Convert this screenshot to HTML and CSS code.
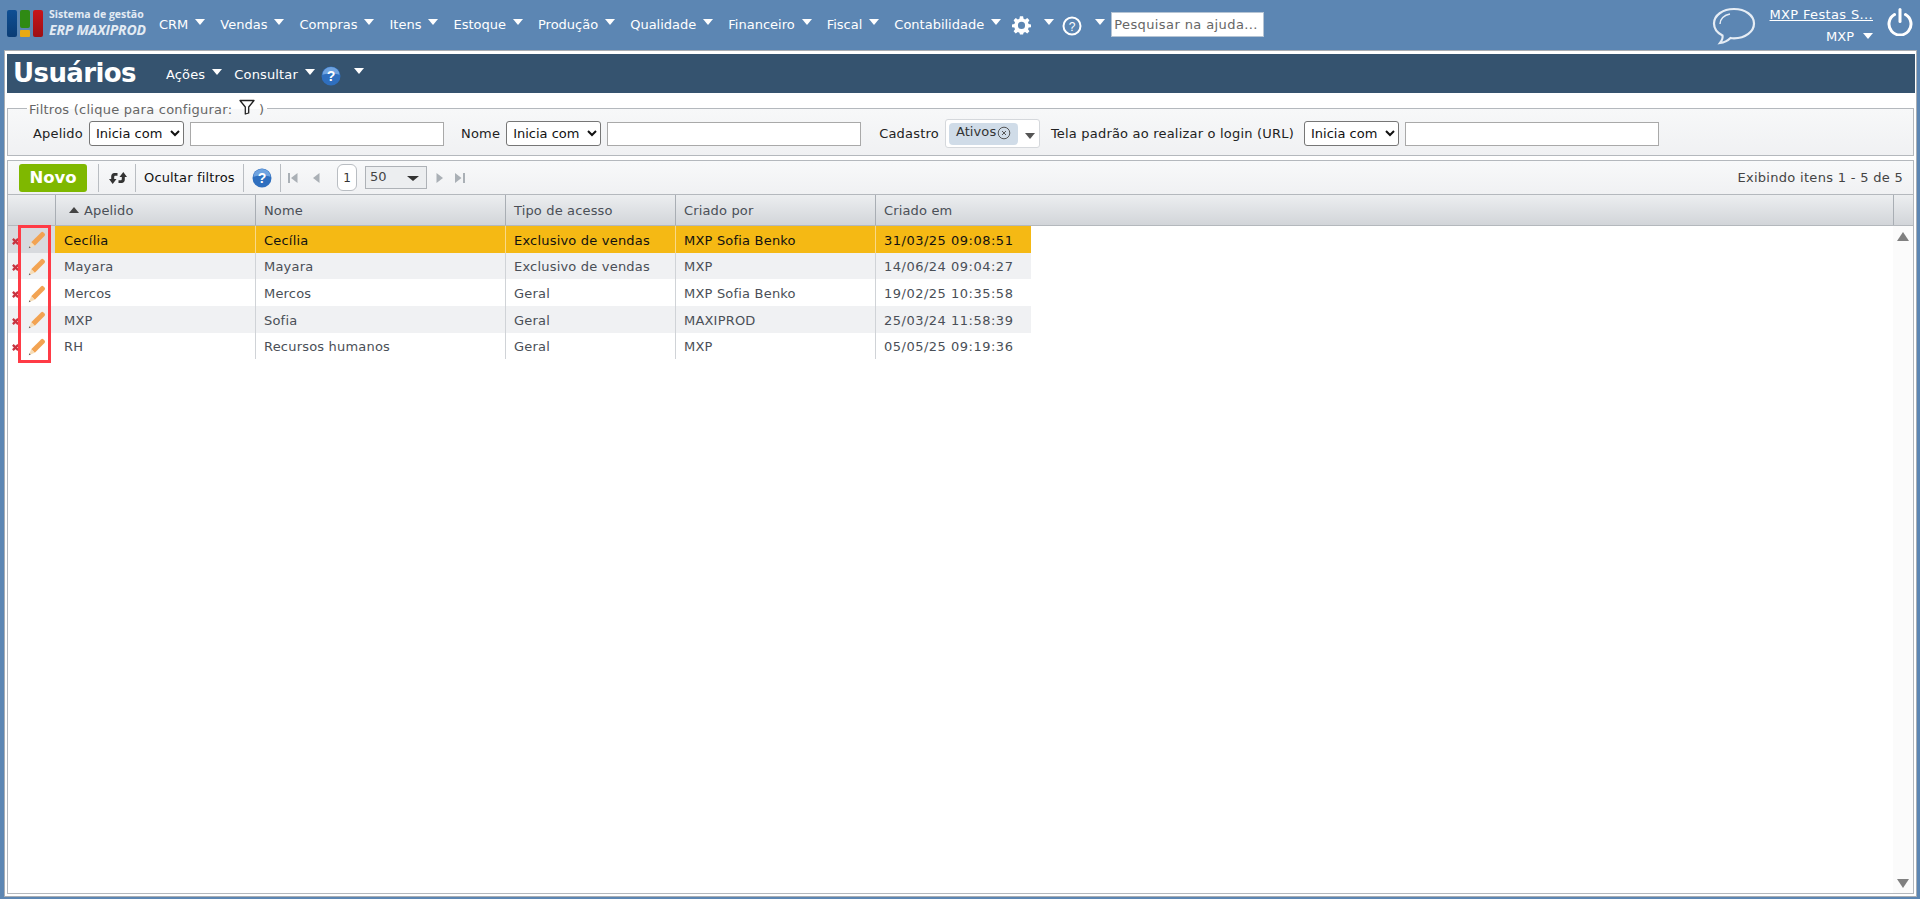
FILE: index.html
```html
<!DOCTYPE html>
<html lang="pt-BR">
<head>
<meta charset="utf-8">
<title>Usuários</title>
<link rel="stylesheet" href="styles.css">
</head>
<body>
<svg class="defs" width="0" height="0">
  <defs>
    <symbol id="pencil" viewBox="0 0 18 18">
      <path d="M3.200 11.200 13 1.400a1.800 1.800 0 0 1 2.500 0l1 1a1.800 1.800 0 0 1 0 2.500L6.800 14.800Z" fill="#f2a352"/>
      <path d="M3.200 11.200 6.800 14.800 .8 17.200Z" fill="#f6dcb6"/>
      <path d="M1.500 15.300 2.700 16.500.8 17.200Z" fill="#555"/>
    </symbol>
    <symbol id="cross" viewBox="0 0 8 8">
      <path d="M1 1 7 7M7 1 1 7" stroke="#c8333f" stroke-width="2.6"/>
    </symbol>
    <symbol id="help" viewBox="0 0 20 20">
      <circle cx="10" cy="10" r="9.5" fill="#2f6fbf"/>
      <path d="M1.5 9a8.5 8 0 0 1 17 0c-3 -2-14 -2-17 0Z" fill="#6fa3e0"/>
      <text x="10" y="15" text-anchor="middle" class="help-mark">?</text>
    </symbol>
  </defs>
</svg>
<header class="topbar">
  <div class="logo">
    <div class="logo-mark">
      <span class="logo-bar logo-blue"></span>
      <span class="logo-col"><span class="logo-green"></span><span class="logo-yellow"></span></span>
      <span class="logo-bar logo-red"></span>
    </div>
    <div class="logo-text"><span class="logo-top">Sistema de gestão</span><span class="logo-bottom">ERP MAXIPROD</span></div>
  </div>
  <nav class="menu">
    <span class="menu-item">CRM<i class="caret"></i></span>
    <span class="menu-item">Vendas<i class="caret"></i></span>
    <span class="menu-item">Compras<i class="caret"></i></span>
    <span class="menu-item">Itens<i class="caret"></i></span>
    <span class="menu-item">Estoque<i class="caret"></i></span>
    <span class="menu-item">Produção<i class="caret"></i></span>
    <span class="menu-item">Qualidade<i class="caret"></i></span>
    <span class="menu-item">Financeiro<i class="caret"></i></span>
    <span class="menu-item">Fiscal<i class="caret"></i></span>
    <span class="menu-item menu-last">Contabilidade<i class="caret"></i></span>
    <svg class="gear" viewBox="0 0 24 24"><path fill="#fff" fill-rule="evenodd" d="M10 1h4l.6 3.2 2 .8L19.300 3.200 22 6l-1.800 2.700.8 2L24 11.300v3.400l-3 .6-.8 2L22 20l-2.700 2.700-2.700-1.800-2 .8L14 24h-4l-.6-2.300-2-.8L4.700 22.700 2 20l1.800-2.700-.8-2L0 14.700v-3.400l3-.6.8-2L2 6l2.700-2.800L7.400 5l2-.8ZM12 8a4.500 4.500 0 1 0 0 9 4.500 4.500 0 0 0 0-9Z"/></svg>
    <i class="caret caret-gear"></i>
    <svg class="qmark" viewBox="0 0 20 20"><circle cx="10" cy="10" r="8.500" fill="none" stroke="#fff" stroke-width="2"/><text x="10" y="14.500" text-anchor="middle" class="qmark-text">?</text></svg>
    <i class="caret caret-q"></i>
    <input class="search" type="text" placeholder="Pesquisar na ajuda...">
  </nav>
  <div class="user-area">
    <svg class="bubble" viewBox="0 0 44 38"><path d="M22 2C10.500 2 2 8.500 2 16.500c0 5 3.500 9.500 8.500 12 .5 2.500-.5 5-2.500 7.500 4.500-.5 8-2.500 10.500-5 1 .2 2.300.3 3.500.3 11.500 0 20-6.800 20-14.800S33.500 2 22 2Z" fill="none" stroke="#e6edf5" stroke-width="2.200"/><path d="M8 17c0-5 4-9 10-10" fill="none" stroke="#e6edf5" stroke-width="1.500"/></svg>
    <div class="user-info">
      <a class="user-name" href="#">MXP Festas S...</a>
      <span class="user-role">MXP<i class="caret caret-role"></i></span>
    </div>
    <svg class="power" viewBox="0 0 26 28"><path d="M7.500 6.500a11 11 0 1 0 11 0" fill="none" stroke="#fff" stroke-width="3" stroke-linecap="round"/><path d="M13 1.500v12" stroke="#fff" stroke-width="3" stroke-linecap="round"/></svg>
  </div>
</header>

<main class="panel">
  <div class="title-bar">
    <h1 class="title">Usuários</h1>
    <span class="title-menu">Ações<i class="caret caret-title"></i></span>
    <span class="title-menu title-menu-2">Consultar<i class="caret caret-title"></i></span>
    <svg class="help-icon help-title"><use href="#help"/></svg>
    <i class="caret caret-title caret-help"></i>
  </div>

  <fieldset class="filters">
    <legend class="legend">Filtros (clique para configurar: <svg class="funnel" viewBox="0 0 16 16"><path d="M1 1.500h14L9.700 8v6L6.300 15V8Z" fill="none" stroke="#222" stroke-width="1.300" stroke-linejoin="round"/></svg> )</legend>
    <label class="flabel flabel-apelido">Apelido</label>
    <select class="fselect"><option>Inicia com</option></select>
    <input class="finput" type="text">
    <label class="flabel flabel-nome">Nome</label>
    <select class="fselect"><option>Inicia com</option></select>
    <input class="finput finput-nome" type="text">
    <label class="flabel flabel-cadastro">Cadastro</label>
    <div class="multi">
      <span class="tag">Ativos<svg class="tag-x" viewBox="0 0 14 14"><circle cx="7" cy="7" r="5.800" fill="none" stroke="#555" stroke-width="1"/><path d="M5 5l4 4M9 5 5 9" stroke="#555" stroke-width="1"/></svg></span>
      <i class="multi-arrow"></i>
    </div>
    <label class="flabel flabel-tela">Tela padrão ao realizar o login (URL)</label>
    <select class="fselect fselect-tela"><option>Inicia com</option></select>
    <input class="finput finput-tela" type="text">
  </fieldset>

  <section class="grid">
    <div class="toolbar">
      <button class="novo" type="button">Novo</button>
      <span class="sep sep-novo"></span>
      <svg class="refresh" viewBox="0 0 18 14"><path d="M8.500 2 8.500 4.800H6.500C5.700 4.800 5.200 5.300 5.200 6.100V8H7.500L3.700 13 0 8H2.200V5.200C2.200 3.400 3.500 2 5.200 2ZM9.500 12V9.200H11.500C12.300 9.200 12.800 8.700 12.800 7.900V6H10.500L14.300 1 18 6H15.800V8.800C15.800 10.600 14.500 12 12.800 12Z" fill="#333"/></svg>
      <span class="sep sep-refresh"></span>
      <span class="tool-text">Ocultar filtros</span>
      <span class="sep sep-ocultar"></span>
      <svg class="help-icon help-tool"><use href="#help"/></svg>
      <span class="sep sep-help"></span>
      <svg class="pager pager-first" viewBox="0 0 10 12"><path d="M0 1h2v10H0ZM9.500 1v10L3 6Z" fill="#aab0b6"/></svg>
      <svg class="pager pager-prev" viewBox="0 0 7 12"><path d="M6.500 1v10L0 6Z" fill="#aab0b6"/></svg>
      <span class="page-box">1</span>
      <span class="page-size">50<i class="size-arrow"></i></span>
      <svg class="pager pager-next" viewBox="0 0 7 12"><path d="M.5 1v10L7 6Z" fill="#aab0b6"/></svg>
      <svg class="pager pager-last" viewBox="0 0 10 12"><path d="M0 1v10l6.500-5ZM8 1h2v10H8Z" fill="#aab0b6"/></svg>
      <span class="count">Exibindo itens 1 - 5 de 5</span>
    </div>

    <div class="head">
      <div class="hc hc-0"></div>
      <div class="hc hc-1"><i class="sort"></i>Apelido</div>
      <div class="hc hc-2">Nome</div>
      <div class="hc hc-3">Tipo de acesso</div>
      <div class="hc hc-4">Criado por</div>
      <div class="hc hc-5">Criado em</div>
      <div class="hc hc-6"></div>
    </div>

    <div class="body">
      <div class="rows">
        <div class="row row-sel">
          <div class="c c-0"><svg class="x"><use href="#cross"/></svg><svg class="pen"><use href="#pencil"/></svg></div>
          <div class="c c-1">Cecília</div><div class="c c-2">Cecília</div><div class="c c-3">Exclusivo de vendas</div><div class="c c-4">MXP Sofia Benko</div><div class="c c-5">31/03/25 09:08:51</div>
        </div>
        <div class="row row-alt">
          <div class="c c-0"><svg class="x"><use href="#cross"/></svg><svg class="pen"><use href="#pencil"/></svg></div>
          <div class="c c-1">Mayara</div><div class="c c-2">Mayara</div><div class="c c-3">Exclusivo de vendas</div><div class="c c-4">MXP</div><div class="c c-5">14/06/24 09:04:27</div>
        </div>
        <div class="row">
          <div class="c c-0"><svg class="x"><use href="#cross"/></svg><svg class="pen"><use href="#pencil"/></svg></div>
          <div class="c c-1">Mercos</div><div class="c c-2">Mercos</div><div class="c c-3">Geral</div><div class="c c-4">MXP Sofia Benko</div><div class="c c-5">19/02/25 10:35:58</div>
        </div>
        <div class="row row-alt">
          <div class="c c-0"><svg class="x"><use href="#cross"/></svg><svg class="pen"><use href="#pencil"/></svg></div>
          <div class="c c-1">MXP</div><div class="c c-2">Sofia</div><div class="c c-3">Geral</div><div class="c c-4">MAXIPROD</div><div class="c c-5">25/03/24 11:58:39</div>
        </div>
        <div class="row">
          <div class="c c-0"><svg class="x"><use href="#cross"/></svg><svg class="pen"><use href="#pencil"/></svg></div>
          <div class="c c-1">RH</div><div class="c c-2">Recursos humanos</div><div class="c c-3">Geral</div><div class="c c-4">MXP</div><div class="c c-5">05/05/25 09:19:36</div>
        </div>
        <div class="redbox"></div>
      </div>
      <div class="scroll"><i class="sc-up"></i><i class="sc-down"></i></div>
    </div>
  </section>
</main>
</body>
</html>
```

FILE: styles.css
```css
* { box-sizing: border-box; }
html, body { margin: 0; height: 899px; overflow: hidden; }
body {
  background: #5c86b3;
  font-family: "DejaVu Sans", Verdana, sans-serif;
  font-size: 13px;
  color: #222;
}
.defs { position: absolute; }
.help-mark { font: bold 14px "Liberation Sans", sans-serif; fill: #fff; }
.qmark-text { font: 12px "Liberation Sans", sans-serif; fill: #fff; }

.caret {
  display: inline-block;
  width: 0; height: 0;
  border-left: 5px solid transparent;
  border-right: 5px solid transparent;
  border-top: 6px solid #fff;
}

/* top bar */
.topbar { height: 50px; display: flex; align-items: flex-start; position: relative; }
.logo { display: flex; margin: 10px 0 0 7px; width: 152px; flex: none; }
.logo-mark { display: flex; gap: 3px; height: 27px; }
.logo-bar { width: 10px; border-radius: 2px; }
.logo-blue { background: linear-gradient(#0e4f94, #0b3d75); }
.logo-red { background: linear-gradient(#c8141a, #9c0f14); }
.logo-col { display: flex; flex-direction: column; gap: 2px; width: 10px; }
.logo-green { flex: 1; background: #2f8a14; border-radius: 2px; }
.logo-yellow { height: 7px; background: #e8a913; border-radius: 1px; }
.logo-text { margin-left: 6px; display: flex; flex-direction: column; color: #e3ebf3; }
.logo-top { font: bold 10.500px/11px "Open Sans", sans-serif; white-space: nowrap; margin-top: -1px; }
.logo-bottom { font: italic bold 14px/15px "Open Sans", sans-serif; white-space: nowrap; margin-top: 2px; letter-spacing: -.2px; }

.menu { display: flex; align-items: flex-start; color: #fff; font-size: 13px; }
.menu-item { display: flex; align-items: center; white-space: nowrap; height: 18px; margin-top: 15px; margin-right: 15px; }
.menu-item .caret { margin: -5px 0 0 7px; }
.menu-last { margin-right: 11px; }
.gear { width: 19px; height: 20px; margin-top: 15px; flex: none; }
.caret-gear { margin: 19px 0 0 13px; flex: none; }
.qmark { width: 20px; height: 20px; margin: 16px 0 0 8px; flex: none; }
.caret-q { margin: 19px 0 0 13px; flex: none; }
.search {
  margin: 12px 0 0 6px; width: 153px; height: 25px;
  border: 1px solid #b5c4d4; padding: 0 2px; background: #fff;
  font: 13px "DejaVu Sans", sans-serif; letter-spacing: .4px;
}
.search::placeholder { color: #666; opacity: 1; }

.user-area { margin-left: auto; display: flex; align-items: flex-start; padding-right: 7px; }
.bubble { width: 44px; height: 38px; margin-top: 7px; }
.user-info { width: 105px; margin-left: 12px; display: flex; flex-direction: column; align-items: flex-end; color: #fff; }
.user-name { color: #fff; text-decoration: underline; white-space: nowrap; margin-top: 6px; height: 20px; line-height: 18px; letter-spacing: .35px; }
.user-role { display: flex; align-items: center; margin-top: 3px; font-size: 13px; }
.caret-role { margin: -2px 0 0 9px; }
.power { width: 26px; height: 28px; margin: 8px 0 0 14px; }

/* panel */
.panel {
  margin: 0 3px 0 4px; height: 847px; background: #fff;
  border: 1px solid #a9aeb4; padding: 3px 1px 2px 2px;
  display: flex; flex-direction: column;
}
.title-bar { height: 39px; background: #35536f; display: flex; align-items: center; color: #fff; flex: none; }
.title { margin: 0 0 0 6px; font: bold 26px/39px "DejaVu Sans", sans-serif; letter-spacing: -.6px; width: 153px; flex: none; }
.title-menu { display: flex; align-items: center; letter-spacing: .15px; white-space: nowrap; margin-top: 2px; }
.title-menu-2 { margin-left: 12px; }
.caret-title { margin: -5px 0 0 7px; }
.help-icon { width: 20px; height: 20px; flex: none; }
.help-title { margin: 4px 0 0 6px; }
.caret-help { margin-left: 13px; }

/* filters */
.filters {
  margin: 6px 1px 0 0; padding: 2px 0 0 25px; height: 57px; flex: none;
  border: 1px solid #b4b8bd;
  background: linear-gradient(#f7f8f9, #f0f1f3);
  display: flex; align-items: center;
  min-width: 0;
}
.legend { margin-left: -6px; padding: 0 3px 0 2px; color: #666; font-size: 13px; letter-spacing: .25px; white-space: nowrap; }
.funnel { width: 16px; height: 16px; margin-left: 2px; vertical-align: -1px; }
.flabel { white-space: nowrap; letter-spacing: .2px; color: #222; }
.fselect {
  width: 95px; height: 25px; margin-left: 6px; padding: 0 0 0 2px;
  border: 1px solid #767676; border-radius: 3px; background: #fff;
  font: 13px "DejaVu Sans", sans-serif; letter-spacing: 0; color: #111;
}
.fselect-tela { margin-left: 10px; }
.finput { width: 254px; height: 24px; margin-left: 6px; border: 1px solid #a9a9a9; background: #fff; }
.flabel-nome { margin-left: 17px; }
.flabel-cadastro { margin-left: 18px; }
.flabel-tela { margin-left: 11px; }
.multi {
  width: 95px; height: 29px; margin-left: 6px; background: #fff;
  border: 1px solid #d5d8dc; border-radius: 3px;
  display: flex; align-items: flex-start; padding: 3px 0 0 3px;
}
.tag { width: 69px; height: 22px; background: #d0dce8; border-radius: 4px; padding: 0 0 0 7px; display: flex; align-items: flex-start; line-height: 18px; letter-spacing: .1px; color: #333; white-space: nowrap; }
.tag-x { width: 14px; height: 14px; margin: 3px 0 0 1px; flex: none; }
.multi-arrow { width: 0; height: 0; margin: 10px 0 0 7px; border-left: 5px solid transparent; border-right: 5px solid transparent; border-top: 6px solid #555; }

/* grid */
.grid {
  margin: 4px 1px 0 0; flex: 1; min-height: 0;
  border: 1px solid #b4b8bd;
  display: flex; flex-direction: column;
}
.toolbar {
  height: 33px; flex: none; display: flex; align-items: center; position: relative;
  background: linear-gradient(#f8f9fa, #f0f1f3);
  padding-left: 11px;
}
.novo {
  width: 68px; height: 28px; border: 0; border-radius: 3px; background: #7fb800;
  color: #fff; font: bold 16.500px "DejaVu Sans", sans-serif; padding: 0; flex: none;
}
.sep { width: 1px; height: 28px; background: #b9bdc2; flex: none; }
.sep-novo { margin-left: 11px; }
.refresh { width: 18px; height: 14px; margin-left: 10px; flex: none; }
.sep-refresh { margin-left: 8px; }
.tool-text { margin-left: 8px; width: 99px; flex: none; color: #111; letter-spacing: .15px; white-space: nowrap; }
.sep-ocultar { margin-left: 0; }
.help-tool { margin-left: 8px; }
.sep-help { margin-left: 8px; }
.pager { height: 12px; flex: none; }
.pager-first { width: 10px; margin-left: 7px; }
.pager-prev { width: 7px; margin-left: 15px; }
.page-box {
  width: 20px; height: 27px; margin-left: 17px; flex: none;
  background: #fff; border: 1px solid #b9bdc2; border-radius: 6px;
  display: flex; align-items: center; justify-content: center; font-size: 12px; color: #333;
}
.page-size {
  width: 62px; height: 23px; margin-left: 8px; flex: none;
  background: #eceef0; border: 1px solid #aeb2b7;
  display: flex; align-items: center; justify-content: space-between; padding: 0 7px 3px 4px;
  font-size: 13px; color: #444;
}
.size-arrow { width: 0; height: 0; margin-top: 5px; border-left: 6px solid transparent; border-right: 6px solid transparent; border-top: 5px solid #333; }
.pager-next { width: 7px; margin-left: 9px; }
.pager-last { width: 10px; margin-left: 12px; }
.count { margin-left: auto; margin-right: 10px; color: #444; letter-spacing: .3px; white-space: nowrap; }

.head {
  height: 32px; flex: none; display: flex;
  border-top: 1px solid #b4b8bd; border-bottom: 1px solid #b4b8bd;
  background: linear-gradient(#eceef0, #d2d5d9);
  color: #4a4f57;
}
.hc { display: flex; align-items: center; padding-left: 8px; border-right: 1px solid #a9aeb4; letter-spacing: .15px; flex: none; white-space: nowrap; }
.hc-0 { width: 48px; }
.hc-1 { width: 200px; padding-left: 13px; }
.hc-2 { width: 250px; }
.hc-3 { width: 170px; }
.hc-4 { width: 200px; }
.hc-5 { flex: 1; }
.hc-6 { width: 19px; border-right: 0; }
.sort { width: 0; height: 0; margin-right: 5px; border-left: 5px solid transparent; border-right: 5px solid transparent; border-bottom: 6px solid #444; }

.body { flex: 1; min-height: 0; display: flex; justify-content: space-between; }
.rows { position: relative; width: 1023px; }
.row { height: 26.670px; display: flex; color: #4a4f57; background: #fff; }
.row-alt { background: #f0f1f3; }
.row-sel { background: #f5b914; color: #111; }
.c { display: flex; align-items: center; padding: 2px 0 0 8px; border-left: 1px solid #d0d3d7; letter-spacing: .2px; white-space: nowrap; flex: none; }
.row-sel .c { border-left-color: #f9d987; }
.c-0 { width: 47px; padding-left: 4px; border-left: 0; background: #fff; }
.row-alt .c-0 { background: #f0f1f3; }
.row-sel .c-0 { background: #d8dade; }
.c-1 { width: 200px; border-left: 0; padding-left: 9px; }
.c-2 { width: 250px; }
.c-3 { width: 170px; }
.c-4 { width: 200px; }
.c-5 { width: 156px; letter-spacing: .5px; }
.x { width: 7px; height: 7px; flex: none; margin-top: 2px; }
.pen { width: 18px; height: 18px; margin-left: 9px; flex: none; }

.redbox {
  position: absolute; left: 10px; top: -1px; width: 33px; height: 138px;
  border: 3px solid #ff3b46;
}
.scroll {
  width: 20px; background: #fbfbfb; display: flex; flex-direction: column;
  justify-content: space-between; align-items: center; padding: 6px 0 5px;
}
.sc-up { width: 0; height: 0; border-left: 6px solid transparent; border-right: 6px solid transparent; border-bottom: 9px solid #808080; }
.sc-down { width: 0; height: 0; border-left: 6px solid transparent; border-right: 6px solid transparent; border-top: 9px solid #808080; }
```
